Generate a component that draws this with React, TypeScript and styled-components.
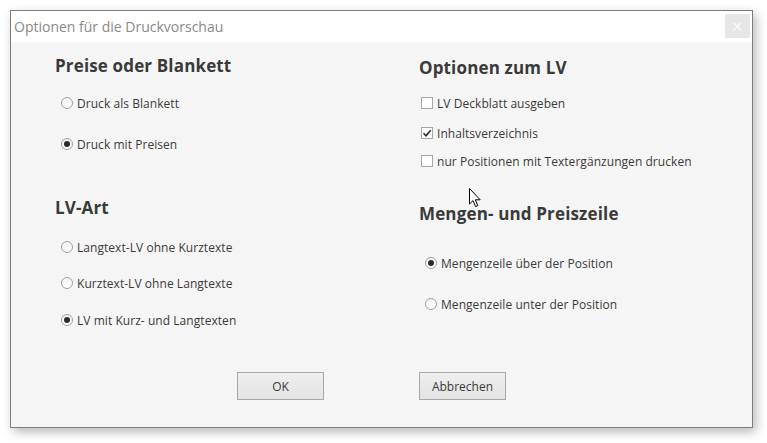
import { createGlobalStyle, styled } from 'styled-components';

const Global = createGlobalStyle`
  html, body {
    margin: 0;
    padding: 0;
    background: #ffffff;
    font-family: "Open Sans", "Noto Sans", "Liberation Sans", sans-serif;
  }
`;

const Page = styled.div`
  position: relative;
  width: 767px;
  height: 443px;
  padding: 10px 0 0 10px;
  box-sizing: border-box;
`;

const Window = styled.div`
  width: 743px;
  height: 418px;
  box-sizing: border-box;
  border: 1px solid #7d7d7d;
  background: #f5f5f5;
  display: flex;
  flex-direction: column;
  box-shadow: 3px 4px 10px rgba(0, 0, 0, 0.28);
`;

const TitleBar = styled.div`
  height: 31px;
  background: #ffffff;
  display: flex;
  align-items: center;
  justify-content: space-between;
  padding: 0 2px 0 3px;
`;

const Title = styled.span`
  font-size: 14px;
  color: #8a8a8a;
  letter-spacing: 0;
`;

const CloseButton = styled.div`
  width: 25px;
  height: 24px;
  background: #e6e6e6;
  color: #f8f8f8;
  font-size: 15px;
  display: flex;
  align-items: center;
  justify-content: center;
  margin-top: -2px;
`;

const Body = styled.div`
  flex: 1;
  display: flex;
  flex-direction: column;
`;

const Columns = styled.div`
  display: grid;
  grid-template-columns: 364px 1fr;
  padding-left: 44px;
  flex: 1;
`;

const Column = styled.div<{ $top: number }>`
  display: flex;
  flex-direction: column;
  padding-top: ${p => p.$top}px;
`;

const Heading = styled.div<{ $gap?: number }>`
  height: 24px;
  line-height: 24px;
  font-size: 17px;
  font-weight: 700;
  color: #3a3a3a;
  margin-top: ${p => p.$gap ?? 0}px;
  letter-spacing: 0.15px;
`;

const Row = styled.label<{ $gap: number; $indent: number }>`
  height: 20px;
  display: flex;
  align-items: center;
  gap: 4px;
  margin-top: ${p => p.$gap}px;
  padding-left: ${p => p.$indent}px;
  font-size: 12px;
  color: #3a3a3a;
  letter-spacing: 0.05px;
`;

const RadioCircle = styled.span<{ $checked?: boolean }>`
  width: 12px;
  height: 12px;
  box-sizing: border-box;
  border: 1px solid #a0a0a0;
  border-radius: 50%;
  background: linear-gradient(#f2f2f2, #ffffff);
  display: flex;
  align-items: center;
  justify-content: center;
  &::after {
    content: '';
    display: ${p => (p.$checked ? 'block' : 'none')};
    width: 6px;
    height: 6px;
    border-radius: 50%;
    background: #2b2b2b;
  }
`;

const CheckBox = styled.span`
  width: 12px;
  height: 12px;
  box-sizing: border-box;
  border: 1px solid #a6a6a6;
  background: #ffffff;
  display: flex;
  align-items: center;
  justify-content: center;
`;

const Footer = styled.div`
  display: flex;
  gap: 95px;
  padding: 0 0 27px 226px;
`;

const Button = styled.div`
  width: 87px;
  height: 28px;
  box-sizing: border-box;
  border: 1px solid #a8a8a8;
  background: linear-gradient(#efefef, #e3e3e3);
  display: flex;
  align-items: center;
  justify-content: center;
  font-size: 12px;
  color: #3a3a3a;
`;

const Cursor = styled.svg`
  position: absolute;
  left: 469px;
  top: 188px;
`;

function Radio({ label, checked, gap, indent }: { label: string; checked?: boolean; gap: number; indent: number }) {
  return (
    <Row $gap={gap} $indent={indent}>
      <RadioCircle $checked={checked} />
      {label}
    </Row>
  );
}

function Check({ label, checked, gap }: { label: string; checked?: boolean; gap: number }) {
  return (
    <Row $gap={gap} $indent={2}>
      <CheckBox>
        {checked && (
          <svg width="10" height="10" viewBox="0 0 10 10">
            <path d="M1.5 5.2 L4 7.7 L8.7 2.2" fill="none" stroke="#262626" strokeWidth="1.6" />
          </svg>
        )}
      </CheckBox>
      {label}
    </Row>
  );
}

export default function App() {
  return (
    <Page>
      <Global />
      <Window>
        <TitleBar>
          <Title>Optionen für die Druckvorschau</Title>
          <CloseButton>✕</CloseButton>
        </TitleBar>
        <Body>
          <Columns>
            <Column $top={12}>
              <Heading>Preise oder Blankett</Heading>
              <Radio label="Druck als Blankett" gap={15} indent={6} />
              <Radio label="Druck mit Preisen" checked gap={21} indent={6} />
              <Heading $gap={42}>LV-Art</Heading>
              <Radio label="Langtext-LV ohne Kurztexte" gap={17} indent={6} />
              <Radio label="Kurztext-LV ohne Langtexte" gap={16} indent={6} />
              <Radio label="LV mit Kurz- und Langtexten" checked gap={17} indent={6} />
            </Column>
            <Column $top={14}>
              <Heading>Optionen zum LV</Heading>
              <Check label="LV Deckblatt ausgeben" gap={13} />
              <Check label="Inhaltsverzeichnis" checked gap={10} />
              <Check label="nur Positionen mit Textergänzungen drucken" gap={8} />
              <Heading $gap={31}>Mengen- und Preiszeile</Heading>
              <Radio label="Mengenzeile über der Position" checked gap={27} indent={6} />
              <Radio label="Mengenzeile unter der Position" gap={21} indent={6} />
            </Column>
          </Columns>
          <Footer>
            <Button>OK</Button>
            <Button>Abbrechen</Button>
          </Footer>
        </Body>
      </Window>
      <Cursor width="13" height="20" viewBox="0 0 13 20">
        <path d="M0.5 0.5 L0.5 16 L4 12.6 L6.6 18.6 L8.8 17.6 L6.3 11.8 L11.2 11.8 Z" fill="#ffffff" stroke="#000000" strokeWidth="1" strokeLinejoin="miter" />
      </Cursor>
    </Page>
  );
}
